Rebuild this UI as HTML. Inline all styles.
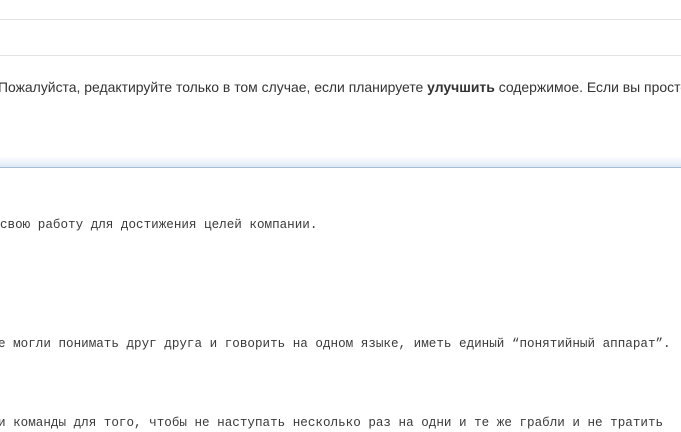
<!DOCTYPE html>
<html><head><meta charset="utf-8"><style>
html,body{margin:0;padding:0;width:681px;height:432px;overflow:hidden;background:#fff;}
body{position:relative;}
.l{position:absolute;left:0;width:681px;height:1px;background:#e3e3e3;}
.s{position:absolute;white-space:nowrap;font-family:"Liberation Sans",Arial,sans-serif;font-size:13.95px;color:#333;}
.m{position:absolute;white-space:nowrap;font-family:"Liberation Mono","DejaVu Sans Mono",monospace;font-size:12.6px;color:#3a3a3a;}
</style></head><body>
<div class="l" style="top:19px"></div>
<div class="l" style="top:55px"></div>
<div class="s" style="left:-2px;top:79px;width:683px;overflow:hidden">Пожалуйста, редактируйте только в том случае, если планируете <b>улучшить</b> содержимое. Если вы просто</div>
<div style="position:absolute;left:0;top:156px;width:681px;height:11px;background:linear-gradient(#fff,#dde9f5)"></div>
<div style="position:absolute;left:0;top:167px;width:681px;height:1px;background:#a7bdd5"></div>
<div class="m" style="left:0;top:218px">свою работу для достижения целей компании.</div>
<div class="m" style="left:-2px;top:337px">е могли понимать друг друга и говорить на одном языке, иметь единый “понятийный аппарат”.</div>
<div class="m" style="left:-2px;top:416px">и команды для того, чтобы не наступать несколько раз на одни и те же грабли и не тратить</div>
</body></html>
